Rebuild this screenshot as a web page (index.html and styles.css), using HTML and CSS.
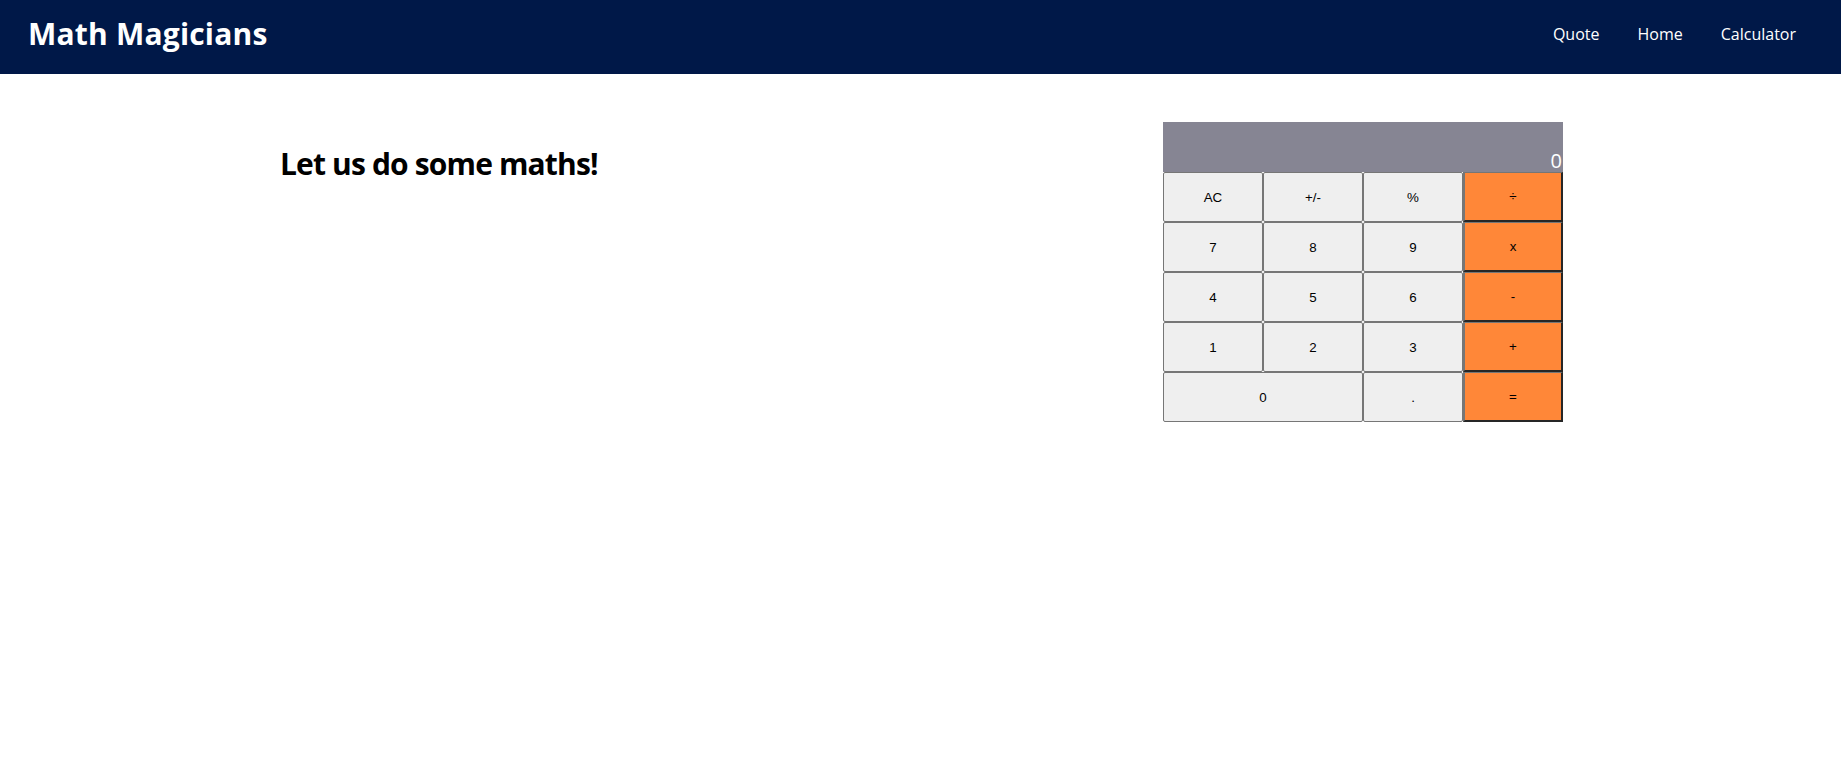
FILE: index.html
```html
<!DOCTYPE html>
<html lang="en">
<head>
<meta charset="utf-8">
<title>Math Magicians</title>
<link rel="stylesheet" href="styles.css">
</head>
<body>
<header class="header">
  <h1 class="brand">Math Magicians</h1>
  <nav class="nav">
    <a class="nav-link" href="#">Quote</a>
    <a class="nav-link" href="#">Home</a>
    <a class="nav-link" href="#">Calculator</a>
  </nav>
</header>
<main class="main">
  <h1 class="title">Let us do some maths!</h1>
  <div class="calc">
    <div class="display">0</div>
    <button class="key">AC</button>
    <button class="key">+/-</button>
    <button class="key">%</button>
    <button class="key op">÷</button>
    <button class="key">7</button>
    <button class="key">8</button>
    <button class="key">9</button>
    <button class="key op">x</button>
    <button class="key">4</button>
    <button class="key">5</button>
    <button class="key">6</button>
    <button class="key op">-</button>
    <button class="key">1</button>
    <button class="key">2</button>
    <button class="key">3</button>
    <button class="key op">+</button>
    <button class="key zero">0</button>
    <button class="key">.</button>
    <button class="key op">=</button>
  </div>
</main>
</body>
</html>
```
FILE: styles.css
```css
* { box-sizing: border-box; }
body {
  margin: 0;
  font-family: "Open Sans", "DejaVu Sans", sans-serif;
  background: #fff;
}
.header {
  height: 74px;
  background: #001848;
  display: flex;
  align-items: center;
  justify-content: space-between;
  padding: 0 45px 7px 28px;
}
.brand {
  margin: 0;
  color: #fff;
  font-size: 30px;
  font-weight: 700;
  letter-spacing: 0.2px;
}
.nav {
  display: flex;
  gap: 38px;
}
.nav-link {
  color: #fff;
  text-decoration: none;
  font-size: 16px;
}
.main {
  display: flex;
  justify-content: space-between;
  align-items: flex-start;
  padding: 48px 278px 0 280px;
}
.title {
  margin: 21px 0 0;
  font-size: 30px;
  font-weight: 700;
  letter-spacing: -0.85px;
  color: #000;
}
.calc {
  width: 400px;
  display: grid;
  grid-template-columns: repeat(4, 100px);
  grid-template-rows: 50px repeat(5, 50px);
}
.display {
  grid-column: 1 / -1;
  background: #868593;
  color: #fff;
  font-size: 20px;
  line-height: 20px;
  display: flex;
  align-items: flex-end;
  justify-content: flex-end;
  padding: 0 1px 1px 0;
}
.key {
  font-family: "Liberation Sans", Arial, sans-serif;
  font-size: 13.33px;
  color: #000;
  background: #efefef;
  border: 1px solid #767676;
  border-radius: 2px;
  padding: 0;
  margin: 0;
}
.key.op {
  background: #ff8738;
  border-radius: 0;
  border-style: solid;
  border-width: 1px 2px 2px 2px;
  border-color: #767676 #262626 #262626 #767676;
}
.key.zero {
  grid-column: span 2;
}
```
